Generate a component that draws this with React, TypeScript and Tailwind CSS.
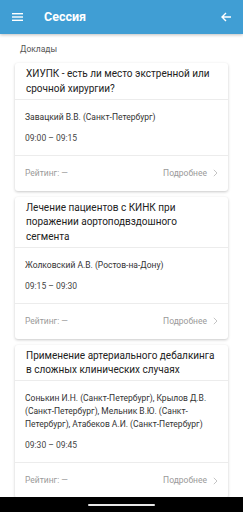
import React from "react";

type Talk = { title: string; authors: string; time: string };

const talks: Talk[] = [
  {
    title: "ХИУПК - есть ли место экстренной или срочной хирургии?",
    authors: "Завацкий В.В. (Санкт-Петербург)",
    time: "09:00 – 09:15",
  },
  {
    title: "Лечение пациентов с КИНК при поражении аортоподвздошного сегмента",
    authors: "Жолковский А.В. (Ростов-на-Дону)",
    time: "09:15 – 09:30",
  },
  {
    title: "Применение артериального дебалкинга в сложных клинических случаях",
    authors:
      "Сонькин И.Н. (Санкт-Петербург), Крылов Д.В. (Санкт-Петербург), Мельник В.Ю. (Санкт-Петербург), Атабеков А.И. (Санкт-Петербург)",
    time: "09:30 – 09:45",
  },
];

function Card({ t }: { t: Talk }) {
  return (
    <div className="mx-[15px] mb-[6px] shrink-0 rounded-[3px] bg-white shadow-[0_1px_3px_rgba(0,0,0,0.22)]">
      <div className="px-[11px] pt-[4px] pb-[2.5px] text-[10px] leading-[14.5px] text-[#222]">
        {t.title}
      </div>
      <div className="border-t border-[#ececec] px-[10px] pt-[11px] pb-[10px] text-[8.5px] leading-[13px] text-[#333]">
        <div>{t.authors}</div>
        <div className="mt-[8px] text-[#444]">{t.time}</div>
      </div>
      <div className="flex h-[36px] items-center justify-between border-t border-[#ececec] px-[10px] text-[8.5px] text-[#9a9a9a]">
        <span>Рейтинг: —</span>
        <span className="flex items-center gap-[6px]">
          Подробнее
          <svg width="5" height="8" viewBox="0 0 5 8" fill="none">
            <path d="M0.8 0.8L4 4L0.8 7.2" stroke="#c4c4c4" strokeWidth="1" />
          </svg>
        </span>
      </div>
    </div>
  );
}

export default function App() {
  return (
    <div
      className="flex h-[512px] w-[243px] flex-col overflow-hidden bg-white"
      style={{ fontFamily: "Roboto, 'Noto Sans', sans-serif" }}
    >
      <div className="relative z-10 flex h-[34px] shrink-0 items-center bg-[#409ed4] shadow-[0_1px_3px_rgba(0,0,0,0.25)]">
        <svg className="ml-[12px]" width="11" height="8" viewBox="0 0 11 8">
          <rect x="0" y="0" width="11" height="1.4" fill="#fff" />
          <rect x="0" y="3.3" width="11" height="1.4" fill="#fff" />
          <rect x="0" y="6.6" width="11" height="1.4" fill="#fff" />
        </svg>
        <span className="ml-[21px] text-[12.5px] font-bold text-white">Сессия</span>
        <svg className="ml-auto mr-[12px]" width="10" height="10" viewBox="0 0 10 10" fill="none">
          <path d="M10 5H1.2M5 1L1 5L5 9" stroke="#fff" strokeWidth="1.4" />
        </svg>
      </div>
      <div className="flex min-h-0 flex-1 flex-col overflow-hidden">
        <div className="shrink-0 px-[20px] pt-[9px] pb-[8px] text-[8.5px] leading-[12px] text-[#555]">
          Доклады
        </div>
        {talks.map((t, i) => (
          <Card key={i} t={t} />
        ))}
        <div className="mx-[15px] h-[60px] shrink-0 rounded-[3px] bg-white shadow-[0_1px_3px_rgba(0,0,0,0.22)]" />
      </div>
      <div className="flex h-[15px] shrink-0 items-center justify-center bg-black">
        <div className="h-[2px] w-[67px] rounded-full bg-[#e8e8e8]" />
      </div>
    </div>
  );
}
